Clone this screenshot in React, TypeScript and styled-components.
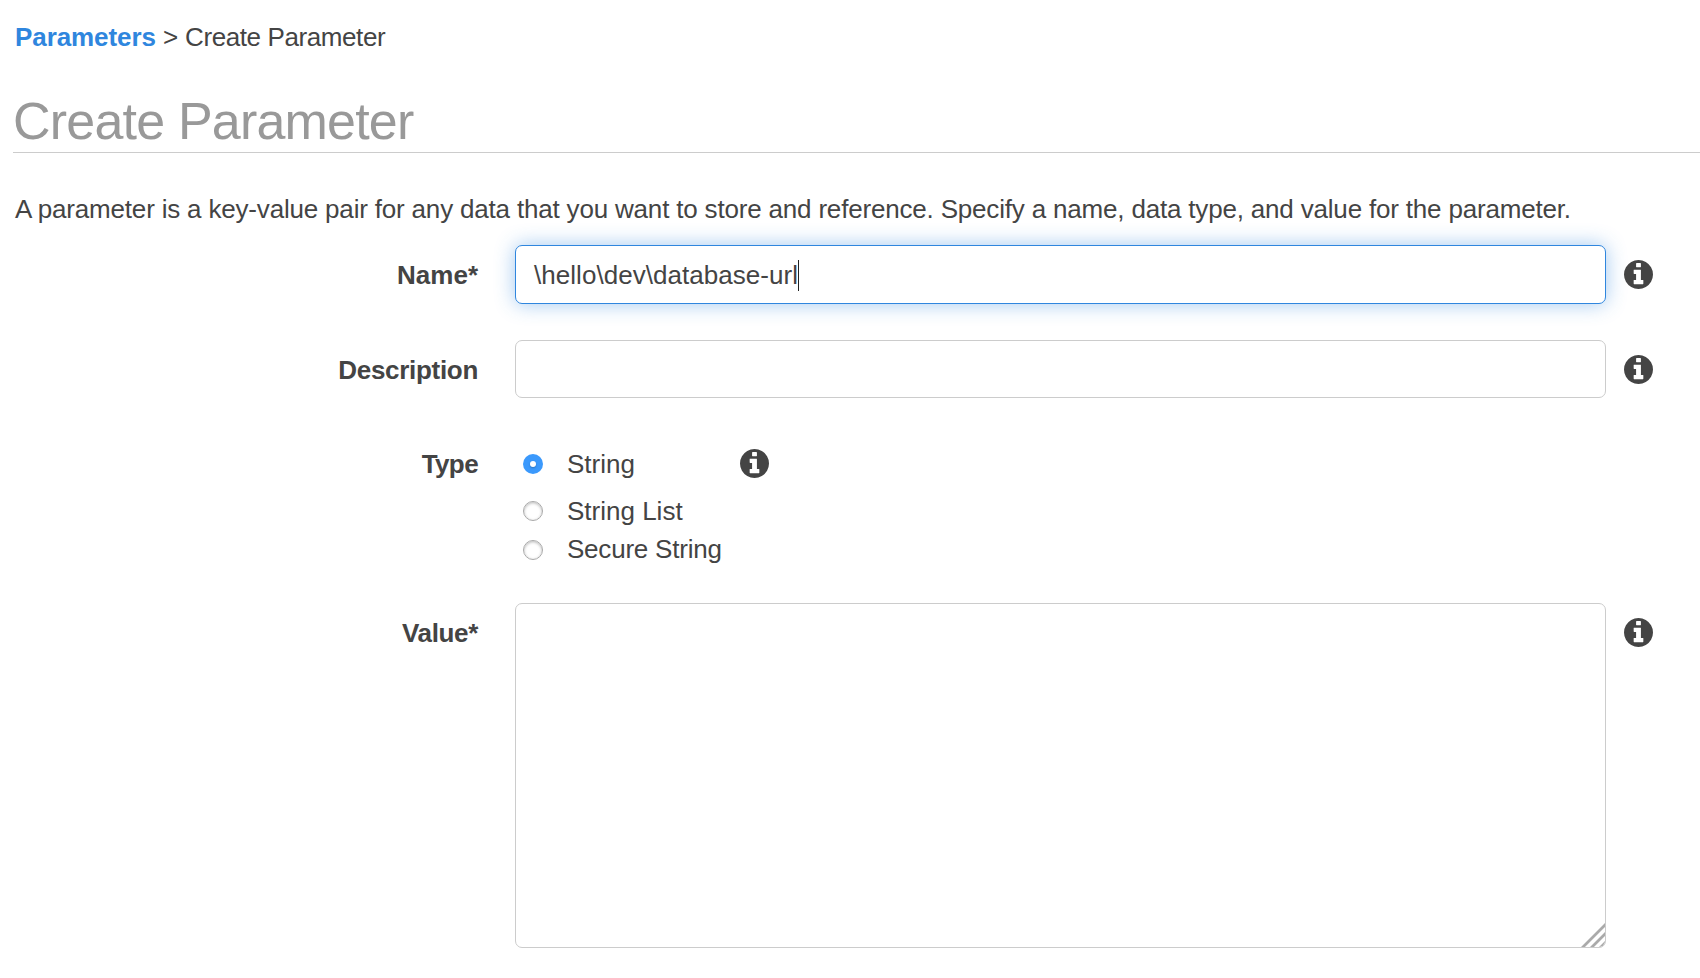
import React from "react";
import styled, { createGlobalStyle } from "styled-components";

const GlobalStyle = createGlobalStyle`
  * { box-sizing: border-box; }
  html, body { margin: 0; padding: 0; background: #fff; overflow: hidden; }
  body {
    font-family: "Liberation Sans", Helvetica, Arial, sans-serif;
    font-size: 26px;
    line-height: 30px;
    color: #444;
  }
`;

const Page = styled.main`
  height: 978px;
  padding: 22px 0 0 13px;
  overflow: hidden;
`;

const Breadcrumb = styled.nav`
  display: flex;
  padding-left: 2px;
  height: 30px;
  white-space: nowrap;
`;

const CrumbLink = styled.a`
  color: #2f86de;
  font-weight: bold;
  letter-spacing: -0.08px;
  width: 148px;
`;

const CrumbSeparator = styled.span`
  width: 22px;
`;

const CrumbCurrent = styled.span`
  letter-spacing: -0.4px;
`;

const Title = styled.h1`
  margin: 39px 0 0;
  padding-bottom: 1px;
  border-bottom: 1px solid #ccc;
  color: #999;
  font-size: 52px;
  font-weight: normal;
  line-height: 60px;
  letter-spacing: -0.8px;
`;

const Intro = styled.p`
  margin: 41px 0 21px;
  padding-left: 2px;
  white-space: nowrap;
  letter-spacing: -0.183px;
`;

const Row = styled.div<{ $gap: number }>`
  display: flex;
  align-items: flex-start;
  margin-bottom: ${(p) => p.$gap}px;
`;

const Label = styled.label<{ $top?: number; $spacing?: number }>`
  width: 465px;
  margin-right: 37px;
  padding-top: ${(p) => p.$top ?? 15}px;
  text-align: right;
  font-weight: bold;
  letter-spacing: ${(p) => p.$spacing ?? 0}px;
`;

const Field = styled.div<{ $height: number; $focused?: boolean }>`
  display: flex;
  align-items: flex-start;
  justify-content: flex-start;
  width: 1091px;
  height: ${(p) => p.$height}px;
  padding: 14px 18px;
  background: #fff;
  border: 1px solid ${(p) => (p.$focused ? "#2f86de" : "#ccc")};
  border-radius: 7px;
  box-shadow: ${(p) => (p.$focused ? "0 0 20px rgba(47, 134, 222, 0.45)" : "none")};
`;

const FieldText = styled.span`
  letter-spacing: 0.04px;
`;

const Caret = styled.span`
  width: 1px;
  height: 31px;
  background: #222;
`;

const Area = styled(Field)`
  align-items: flex-end;
  justify-content: flex-end;
  padding: 0;
  overflow: hidden;
`;

const IconSlot = styled.span<{ $top?: number; $left?: number }>`
  display: flex;
  margin-left: ${(p) => p.$left ?? 18}px;
  padding-top: ${(p) => p.$top ?? 15}px;
`;

const Options = styled.div`
  display: flex;
  flex-direction: column;
  width: 207px;
  padding-left: 8px;
`;

const Option = styled.div<{ $gap?: number; $spacing: number }>`
  display: flex;
  align-items: flex-start;
  height: 30px;
  margin-bottom: ${(p) => p.$gap ?? 0}px;
  white-space: nowrap;
  letter-spacing: ${(p) => p.$spacing}px;
`;

const Radio = styled.span<{ $checked?: boolean; $top?: number }>`
  display: flex;
  align-items: center;
  justify-content: center;
  width: 20px;
  height: 20px;
  margin: ${(p) => p.$top ?? 5}px 24px 0 0;
  border-radius: 50%;
  border: ${(p) => (p.$checked ? "0" : "1px solid #aaa")};
  background: ${(p) => (p.$checked ? "#3b99fc" : "#fff")};
  box-shadow: ${(p) => (p.$checked ? "none" : "inset 0 1px 3px rgba(0, 0, 0, 0.28)")};
`;

const RadioDot = styled.span`
  width: 6px;
  height: 6px;
  border-radius: 50%;
  background: #fff;
  box-shadow: 0 1px 2px rgba(0, 0, 0, 0.25);
`;

function InfoIcon() {
  return (
    <svg width="29" height="29" viewBox="0 128 1536 1536" fill="#444">
      <path d="M1024 1376v-160q0-14-9-23t-23-9h-96v-512q0-14-9-23t-23-9h-320q-14 0-23 9t-9 23v160q0 14 9 23t23 9h96v320h-96q-14 0-23 9t-9 23v160q0 14 9 23t23 9h448q14 0 23-9t9-23zm-128-896v-160q0-14-9-23t-23-9h-192q-14 0-23 9t-9 23v160q0 14 9 23t23 9h192q14 0 23-9t9-23zm640 416q0 209-103 385.5t-279.5 279.5-385.5 103-385.5-103-279.5-279.5-103-385.5 103-385.5 279.5-279.5 385.5-103 385.5 103 279.5 279.5 103 385.5z" />
    </svg>
  );
}

function ResizeGrip() {
  return (
    <svg width="24" height="24" viewBox="0 0 24 24" fill="none" stroke="#aaa" strokeWidth="2.800">
      <path d="M0 26L26 0M9 26L26 9M18 26L26 18" />
    </svg>
  );
}

export default function App() {
  return (
    <>
      <GlobalStyle />
      <Page>
        <Breadcrumb>
          <CrumbLink>Parameters</CrumbLink>
          <CrumbSeparator>&gt;</CrumbSeparator>
          <CrumbCurrent>Create Parameter</CrumbCurrent>
        </Breadcrumb>
        <Title>Create Parameter</Title>
        <Intro>
          A parameter is a key-value pair for any data that you want to store and reference. Specify a name, data type,
          and value for the parameter.
        </Intro>

        <Row $gap={36}>
          <Label>Name*</Label>
          <Field $height={59} $focused>
            <FieldText>\hello\dev\database-url</FieldText>
            <Caret />
          </Field>
          <IconSlot><InfoIcon /></IconSlot>
        </Row>

        <Row $gap={51}>
          <Label $spacing={-0.3}>Description</Label>
          <Field $height={58} />
          <IconSlot><InfoIcon /></IconSlot>
        </Row>

        <Row $gap={39}>
          <Label $top={0} $spacing={-0.6}>Type</Label>
          <Options>
            <Option $gap={17} $spacing={0.02}>
              <Radio $checked><RadioDot /></Radio>
              String
            </Option>
            <Option $gap={8} $spacing={0}>
              <Radio />
              String List
            </Option>
            <Option $spacing={-0.22}>
              <Radio $top={6} />
              Secure String
            </Option>
          </Options>
          <IconSlot $top={0}><InfoIcon /></IconSlot>
        </Row>

        <Row $gap={0}>
          <Label $spacing={-0.35}>Value*</Label>
          <Area $height={345}><ResizeGrip /></Area>
          <IconSlot><InfoIcon /></IconSlot>
        </Row>
      </Page>
    </>
  );
}
